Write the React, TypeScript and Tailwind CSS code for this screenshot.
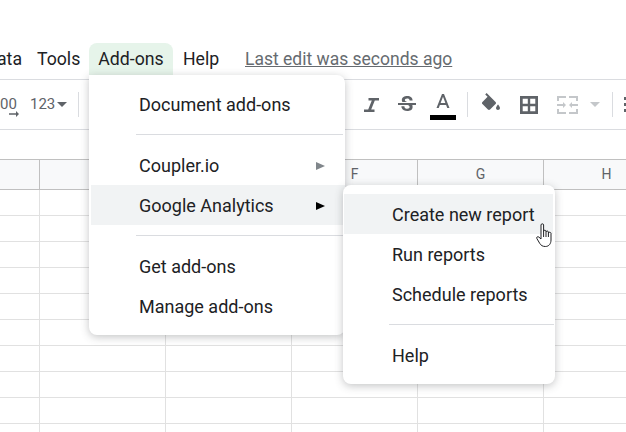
import React from 'react'

const FONT = "font-['Roboto',sans-serif]"
const COLUMNS = ['D', 'E', 'F', 'G', 'H']
const ROW_COUNT = 10

function MenuRow({ label, hover, arrow, className = '' }: { label: string; hover?: boolean; arrow?: string; className?: string }) {
    return (
        <div className={`relative flex h-10 items-center ${hover ? 'bg-[#f1f3f4]' : ''} ${className}`}>
            {label}
            {arrow && <span className={`absolute right-[20px] top-[17px] h-0 w-0 border-y-[4px] border-l-[9px] border-y-transparent ${arrow}`} />}
        </div>
    )
}

function Icon({ d, className = '' }: { d: string; className?: string }) {
    return (
        <svg viewBox="0 0 24 24" className={`size-6 shrink-0 fill-[#5f6368] ${className}`}>
            <path fillRule="evenodd" d={d} />
        </svg>
    )
}

function ToolSep() {
    return <div className="h-[25px] w-px bg-[#dadce0]" />
}

export default function App() {
    return (
        <div className={`relative h-[432px] w-[626px] overflow-hidden bg-white text-[18px] text-[#202124] ${FONT}`}>
            <div className="flex h-[80px] items-end border-b border-[#dadce0] pb-[4px]">
                <div className="flex h-8 items-center whitespace-nowrap text-[17.7px]">
                    <span className="ml-[-3px] w-[40px]">ata</span>
                    <span className="w-[52px]">Tools</span>
                    <span className="flex h-8 w-[84px] items-center justify-center rounded-t-lg bg-[#e6f4ea]">Add-ons</span>
                    <span className="ml-[10px] w-[62px]">Help</span>
                    <span className="text-[17.5px] text-[#666b70] underline">Last edit was seconds ago</span>
                </div>
            </div>

            <div className="flex h-[50px] items-center border-b border-[#dadce0]">
                <div className="flex w-[30px] shrink-0 flex-col text-[15px] leading-[15px] text-[#5f6368]">
                    <span className="mt-[4px]">00</span>
                    <svg viewBox="0 0 10 6" className="ml-[9px] mt-[-1px] h-[6px] w-[10px] fill-[#5f6368]">
                        <path d="M0 2.2h7V0l3 3-3 3V3.8H0z" />
                    </svg>
                </div>
                <span className="text-[15px] text-[#5f6368]">123</span>
                <span className="ml-[2px] h-0 w-0 border-x-[5px] border-t-[5px] border-x-transparent border-t-[#5f6368]" />
                <div className="ml-[11px]"><ToolSep /></div>
                <div className="ml-[280px] flex items-center">
                    <Icon d="M9.5 5v2.5h3.3L9.2 16.5H5V19h10.5v-2.5h-3.3l3.6-9H20V5z" />
                    <Icon className="ml-[12px]" d="M6.85 7.08C6.85 4.37 9.45 3 12.24 3c1.64 0 3 .49 3.9 1.28.77.65 1.46 1.73 1.46 3.24h-3.01c0-.31-.05-.59-.15-.85-.29-.86-1.2-1.28-2.25-1.28-1.86 0-2.34 1.02-2.34 1.7 0 .48.25.88.74 1.21.38.25.77.48 1.41.7H7.39c-.21-.34-.54-.89-.54-1.92zM21 12v-2H3v2h9.62c1.15.45 1.96.75 1.96 1.97 0 1-.81 1.67-2.28 1.67-1.54 0-2.93-.54-2.93-2.51H6.4c0 .55.08 1.13.24 1.58.81 2.29 3.17 3.3 5.67 3.3 2.39 0 5.3-.94 5.3-4.04 0-.3-.03-1.2-.36-1.97H21z" />
                    <div className="ml-[11px] mt-[2px] flex w-[26px] flex-col items-center">
                        <Icon d="M11 3L5.5 17h2.25l1.12-3h6.25l1.12 3h2.25L13 3h-2zm-1.38 9L12 5.67 14.38 12H9.62z" />
                        <div className="h-[5px] w-[26px] bg-black" />
                    </div>
                    <div className="ml-[11px]"><ToolSep /></div>
                    <Icon className="ml-[11px] mt-[1px]" d="M16.56 8.94L7.62 0 6.21 1.41l2.38 2.38-5.15 5.15c-.59.59-.59 1.54 0 2.12l5.5 5.5c.29.29.68.44 1.06.44s.77-.15 1.06-.44l5.5-5.5c.59-.58.59-1.53 0-2.12zM19 11.5s-2 2.17-2 3.5c0 1.1.9 2 2 2s2-.9 2-2c0-1.33-2-3.5-2-3.5z" />
                    <Icon className="ml-[14px] mt-[1px]" d="M3 3v18h18V3zm2.7 2.7h5.1v5.1H5.7zm7.5 0h5.1v5.1h-5.1zM5.7 13.2h5.1v5.1H5.7zm7.5 0h5.1v5.1h-5.1z" />
                    <svg viewBox="0 0 21 18" className="ml-[16px] mt-[1px] h-[18px] w-[21px] shrink-0 fill-[#c4c7ca]">
                        <path d="M0 0h9v2H2v3H0zM12 0h9v5h-2V2h-7zM0 13h2v3h7v2H0zM19 13h2v5h-9v-2h7zM0 8h6V6l3 3-3 3v-2H0zM21 8h-6V6l-3 3 3 3v-2h6z" />
                    </svg>
                    <span className="ml-[12px] h-0 w-0 shrink-0 border-x-[5px] border-t-[5px] border-x-transparent border-t-[#c4c7ca]" />
                    <div className="ml-[12px]"><ToolSep /></div>
                    <div className="ml-[11px] flex flex-col gap-[3px]">
                        <span className="size-[3px] bg-[#5f6368]" />
                        <span className="size-[3px] bg-[#5f6368]" />
                        <span className="size-[3px] bg-[#5f6368]" />
                    </div>
                </div>
            </div>

            <div className="h-[30px] border-b border-[#c0c0c0]" />

            <div className="flex h-[30px] border-b border-[#c0c0c0] bg-[#f8f9fa] text-[14px] text-[#5f6368]">
                <div className="w-10 shrink-0 border-r border-[#c0c0c0]" />
                {COLUMNS.map(c => (
                    <div key={c} className="flex w-[126px] shrink-0 items-center justify-center border-r border-[#c0c0c0]">{c}</div>
                ))}
            </div>

            {Array.from({ length: ROW_COUNT }).map((_, r) => (
                <div key={r} className="flex h-[26px] border-b border-[#e1e1e1]">
                    <div className="w-10 shrink-0 border-r border-[#e1e1e1]" />
                    {COLUMNS.map(c => (
                        <div key={c} className="w-[126px] shrink-0 border-r border-[#e1e1e1]" />
                    ))}
                </div>
            ))}

            <div className="absolute left-[89px] top-[75px] h-[260px] w-[256px] rounded-b-lg rounded-tr-lg bg-white pt-[9px] shadow-[0_2px_8px_rgba(60,64,67,0.3)]">
                <MenuRow className="ml-[2px] pl-[48px]" label="Document add-ons" />
                <div className="ml-[47px] mr-[2px] mt-[10px] mb-[10px] h-px bg-[#dadce0]" />
                <MenuRow className="ml-[2px] pl-[48px]" label="Coupler.io" arrow="border-l-[#80868b]" />
                <MenuRow className="ml-[2px] pl-[48px]" label="Google Analytics" hover arrow="border-l-black" />
                <div className="ml-[47px] mr-[2px] mt-[10px] mb-[10px] h-px bg-[#dadce0]" />
                <MenuRow className="ml-[2px] pl-[48px]" label="Get add-ons" />
                <MenuRow className="ml-[2px] pl-[48px]" label="Manage add-ons" />
            </div>

            <div className="absolute left-[343px] top-[185px] h-[199px] w-[212px] rounded-lg bg-white pt-[9px] shadow-[0_2px_8px_rgba(60,64,67,0.3)]">
                <MenuRow className="ml-px mr-[2px] pl-[48px]" label="Create new report" hover />
                <MenuRow className="ml-px mr-[2px] pl-[48px]" label="Run reports" />
                <MenuRow className="ml-px mr-[2px] pl-[48px]" label="Schedule reports" />
                <div className="ml-[46px] mr-px mt-[10px] mb-[10px] h-px bg-[#dadce0]" />
                <MenuRow className="ml-px mr-[2px] pl-[48px]" label="Help" />
            </div>

            <svg viewBox="0 0 17 24" className="absolute left-[536px] top-[223px] h-6 w-[17px]">
                <path d="M5 2c0-1.6 2.6-1.6 2.6 0v6.2c0-1.3 2.4-1.3 2.4 0v.8c0-1.3 2.4-1.3 2.4 0v1c0-1.1 2.6-1 2.6.3v6.7c0 3.6-2 6.5-5.6 6.5-3 0-4.4-1.2-5.6-3L.9 15.6c-.9-1.2.8-2.6 2-1.5L5 16z" fill="#fff" stroke="#202124" strokeWidth="1" strokeLinejoin="round" />
                <path d="M7.6 8v6M10 9v5M12.4 10v4" fill="none" stroke="#202124" strokeWidth="1" />
            </svg>
        </div>
    )
}
